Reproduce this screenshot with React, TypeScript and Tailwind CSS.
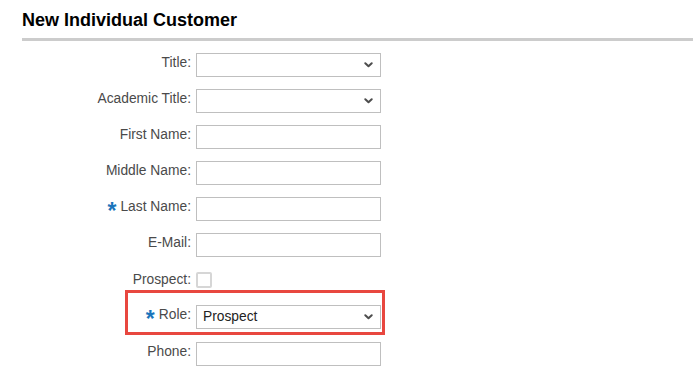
import React from "react";

const font = { fontFamily: '"Liberation Sans", Arial, sans-serif' };

function Chevron() {
  return (
    <svg width="9" height="6" viewBox="0 0 9 6" className="absolute right-[7px] top-1/2 -translate-y-1/2">
      <path d="M1.3 1.3 L4.5 4.3 L7.7 1.3" fill="none" stroke="#4d4d4d" strokeWidth="2" strokeLinecap="round" strokeLinejoin="round" />
    </svg>
  );
}

function Label({ text, required, width, flat }: { text: string; required?: boolean; width: string; flat?: boolean }) {
  return (
    <div className={`${width} flex h-[16px] shrink-0 items-center justify-end overflow-visible text-[13.8px] leading-[16px] text-[#4a4a4a]`}>
      <div className={`flex items-center ${flat ? "" : "-translate-y-[2px]"}`}>
        {required && (
          <span className="relative top-[4px] mr-[4px] h-[16px] text-[23px] font-bold leading-[16px] text-[#1b75bb]">*</span>
        )}
        <span>{text}</span>
      </div>
    </div>
  );
}

function TextInput() {
  return <div className="h-[24px] w-[185px] border border-[#bfbfbf] bg-white" />;
}

function Select({ value }: { value?: string }) {
  return (
    <div className="relative flex h-[24px] w-[185px] items-center border border-[#bfbfbf] bg-white pl-[6px] text-[13.8px] text-[#222]">
      {value}
      <Chevron />
    </div>
  );
}

function Row({ label, required, flat, children, className = "" }: { label: string; required?: boolean; flat?: boolean; children: React.ReactNode; className?: string }) {
  return (
    <div className={`flex items-center gap-[5px] ${className}`}>
      <Label text={label} required={required} flat={flat} width="w-[169px]" />
      {children}
    </div>
  );
}

export default function App() {
  return (
    <div className="h-[374px] w-[693px] overflow-hidden bg-white pl-[22px]" style={font}>
      <h1 className="pt-[10px] text-[18px] font-bold leading-[21px] text-[#000]">New Individual Customer</h1>
      <div className="mt-[7px] h-[3px] bg-[#cccccc]" />

      <div className="flex flex-col">
        <Row label="Title:" className="mt-[12px]">
          <Select />
        </Row>
        <Row label="Academic Title:" className="mt-[12px]">
          <Select />
        </Row>
        <Row label="First Name:" className="mt-[12px]">
          <TextInput />
        </Row>
        <Row label="Middle Name:" className="mt-[12px]">
          <TextInput />
        </Row>
        <Row label="Last Name:" required className="mt-[12px]">
          <TextInput />
        </Row>
        <Row label="E-Mail:" className="mt-[12px]">
          <TextInput />
        </Row>
        <Row label="Prospect:" flat className="mt-[15px] h-[16px]">
          <div className="h-[16px] w-[16px] rounded-[2px] border-2 border-[#d6d6d6] bg-white" />
        </Row>

        <div className="ml-[103px] mt-[2px] w-[260px] border-[3px] border-[#e8473f] pb-[3px] pt-[12px]">
          <div className="flex items-center gap-[5px]">
            <Label text="Role:" required width="w-[63px]" />
            <Select value="Prospect" />
          </div>
        </div>

        <Row label="Phone:" className="mt-[7px]">
          <TextInput />
        </Row>
      </div>
    </div>
  );
}
